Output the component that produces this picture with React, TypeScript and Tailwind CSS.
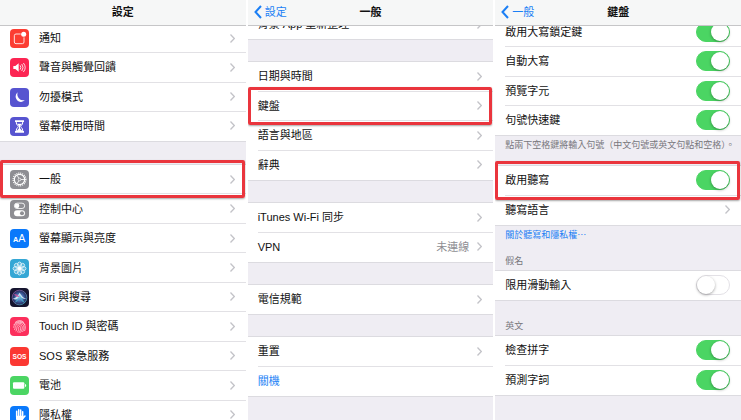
import { useState, type ReactNode } from 'react';
import clsx from 'clsx';

function IconTile({ className, children }: { className: string; children: ReactNode }) {
    return (
        <svg className={clsx('size-[19px] shrink-0 rounded-[4px]', className)} viewBox="0 0 57 57" fill="none" aria-hidden="true">
            {children}
        </svg>
    );
}

const NotificationIcon = () => (
    <IconTile className="bg-[#fc3d32]">
        <path d="M32 15H18a5 5 0 0 0-5 5v19a5 5 0 0 0 5 5h19a5 5 0 0 0 5-5V25" stroke="#fff" strokeWidth="2.5" />
        <circle cx="41" cy="16" r="7.5" fill="#fff" />
    </IconTile>
);

const SoundIcon = () => (
    <IconTile className="bg-[#fc2553]">
        <path d="M10 24h6l10-8v25l-10-8h-6z" fill="#fff" />
        <path d="M31 23q4 5.500 0 11M36 19q7 9.500 0 19M41 16q10 12.500 0 25" stroke="#fff" strokeWidth="2.500" strokeLinecap="round" />
    </IconTile>
);

const MoonIcon = () => (
    <IconTile className="bg-[#5754d0]">
        <path d="M23 13a16 16 0 1 0 22 23A18 18 0 0 1 23 13z" fill="#fff" />
    </IconTile>
);

const HourglassIcon = () => (
    <IconTile className="bg-[#5754d0]">
        <path d="M15 10h27v5H15zM15 42h27v5H15z" fill="#fff" />
        <path d="M19 14v4c0 5 6 8 6 10.500S19 34 19 39v4M38 14v4c0 5-6 8-6 10.500S38 34 38 39v4" stroke="#fff" strokeWidth="3" />
        <path d="M21 20h15l-6 8v6l7 8H20l7-8v-6z" fill="#fff" />
    </IconTile>
);

const GearIcon = () => (
    <IconTile className="bg-[#8e8e93]">
        <circle cx="28.5" cy="28.5" r="19" stroke="#fff" strokeWidth="4" strokeDasharray="3 2.970" />
        <circle cx="28.5" cy="28.5" r="15.5" stroke="#fff" strokeWidth="3.500" />
        <circle cx="28.5" cy="28.5" r="4" stroke="#fff" strokeWidth="2" />
        <path d="M32.500 28.500H43M26.500 25L21 15.500M26.500 32L21 41.500" stroke="#fff" strokeWidth="2.500" />
    </IconTile>
);

const ControlIcon = () => (
    <IconTile className="bg-[#8e8e93]">
        <rect x="13" y="9.500" width="31" height="16" rx="8" stroke="#fff" strokeWidth="2.500" />
        <circle cx="21" cy="17.500" r="7" fill="#fff" />
        <rect x="12" y="31" width="33" height="18" rx="9" fill="#fff" />
        <circle cx="36" cy="40" r="6" fill="#8e8e93" />
    </IconTile>
);

const DisplayIcon = () => (
    <IconTile className="bg-[#0a79fb]">
        <text x="9" y="39" fill="#fff" fontSize="22" fontWeight="600">A</text>
        <text x="25" y="39" fill="#fff" fontSize="32" fontWeight="500">A</text>
    </IconTile>
);

const WallpaperIcon = () => (
    <IconTile className="bg-[#35a7d5]">
        {[0, 45, 90, 135, 180, 225, 270, 315].map((angle) => (
            <ellipse
                key={angle}
                cx="28.5"
                cy="17"
                rx="6"
                ry="8"
                stroke="#fff"
                strokeWidth="2"
                fill="#fff"
                fillOpacity="0.2"
                transform={`rotate(${angle} 28.5 28.5)`}
            />
        ))}
        <circle cx="28.5" cy="28.5" r="5" fill="#fff" />
    </IconTile>
);

const SiriIcon = () => (
    <IconTile className="bg-[#16152f]">
        <defs>
            <radialGradient id="siri-orb">
                <stop offset="0" stopColor="#8fb7e8" />
                <stop offset="0.6" stopColor="#3b5c9c" />
                <stop offset="1" stopColor="#242450" />
            </radialGradient>
            <linearGradient id="siri-rim" x1="0" y1="0" x2="1" y2="1">
                <stop offset="0" stopColor="#b44fa8" />
                <stop offset="1" stopColor="#35c3d6" />
            </linearGradient>
        </defs>
        <circle cx="28.5" cy="28.5" r="22" fill="url(#siri-orb)" stroke="url(#siri-rim)" strokeWidth="2" />
        <path d="M8 32C18 30 24 22 29 14c5 9 11 16 20 19-8 1-14-2-19-8-5 9-13 12-22 7z" fill="#dff3fa" fillOpacity="0.85" />
        <path d="M29 20L14 44c8-1 13-9 15-16 3 9 8 15 16 17z" fill="#4cc5dc" fillOpacity="0.6" />
        <path d="M12 19q8-3 17 7-10 3-17-7z" fill="#cf4d98" fillOpacity="0.8" />
    </IconTile>
);

const FingerprintIcon = () => (
    <IconTile className="bg-[#fc2f5c]">
        <g stroke="#ffd3dc" strokeWidth="2.300" strokeLinecap="round">
            <path d="M16 16C24 8 35 9 41 16M12 23c6-12 27-14 33 0" />
            <path d="M11 31c1-19 34-21 35-1 0 4-1 8-2 11" />
            <path d="M14 38c2-4 1-6 2-9 3-13 24-13 26 1 0 5-1 9-4 14" />
            <path d="M18 42c3-5 2-8 3-12 2-9 15-9 16 1 0 6-2 11-5 15" />
            <path d="M23 45c4-6 3-10 3-14 1-4 6-3 6 0 0 6-1 11-5 16" />
        </g>
    </IconTile>
);

const SosIcon = () => (
    <IconTile className="bg-[#fb3832]">
        <text x="28.5" y="36" fill="#fff" fontSize="20" fontWeight="700" textAnchor="middle">SOS</text>
    </IconTile>
);

const BatteryIcon = () => (
    <IconTile className="bg-[#4bd563]">
        <rect x="9" y="19" width="34" height="19" rx="3" fill="#fff" />
        <path d="M45 24c5 1 5 8 0 9z" fill="#fff" />
    </IconTile>
);

const PrivacyIcon = () => (
    <IconTile className="bg-[#0a79fb]">
        <g stroke="#fff" strokeWidth="4.500" strokeLinecap="round">
            <path d="M20 32V16M26 30V11M32 30V12M38 32V17M39 37l6-7" />
        </g>
        <path d="M18 29h22v7c0 8-4 13-11 13s-11-5-11-12z" fill="#fff" />
    </IconTile>
);

function Chevron() {
    return (
        <svg className="h-[9px] w-[5px] shrink-0" viewBox="0 0 5 9" fill="none" stroke="#c3c3c8" strokeWidth="1.3" aria-hidden="true">
            <path d="M0.500 0.500L4.300 4.500L0.500 8.500" />
        </svg>
    );
}

// Red frame drawn over the row the reader has to tap
function Highlight() {
    return (
        <span className="pointer-events-none absolute right-px left-0 -top-[5px] -bottom-1 z-10 rounded-[2px] border-3 border-[#ea353d] shadow-[0_1px_2px_rgba(0,0,0,0.35)]" />
    );
}

function Panel({ title, back, offset, children }: { title: string; back?: string; offset: string; children: ReactNode }) {
    return (
        <section className="min-w-0 overflow-hidden bg-[#efedf3]">
            <header className="relative z-20 grid h-[26px] grid-cols-[1fr_auto_1fr] items-center border-b border-[#c6c6c8] bg-[#f6f7f7] px-1.5 pb-[2px]">
                <div>
                    {back && (
                        <a href="#" className="flex items-center gap-[3px] text-[#1b7ff5]">
                            <svg className="h-[14px] w-2" viewBox="0 0 8 14" fill="none" stroke="currentColor" strokeWidth="2" aria-hidden="true">
                                <path d="M7 1L1.500 7L7 13" />
                            </svg>
                            {back}
                        </a>
                    )}
                </div>
                <h1 className="font-bold">{title}</h1>
            </header>
            <div className={clsx('flex flex-col', offset)}>{children}</div>
        </section>
    );
}

function Group({ className, children }: { className: string; children: ReactNode }) {
    return (
        <ul className={clsx('grid auto-rows-fr bg-white shadow-[0_0_0_1px_#dcdbe0]', className)}>{children}</ul>
    );
}

interface RowProps {
    label: string;
    icon?: ReactNode;
    value?: string;
    marked?: boolean;
}

function LinkRow({ label, icon, value, marked }: RowProps) {
    return (
        <li className="group relative flex">
            <a href="#" className="flex min-w-0 flex-1 items-center gap-2.5 pl-2.5">
                {icon}
                <span className="flex flex-1 items-center gap-2 self-stretch border-b border-[#e2e1e5] pr-[11px] group-last:border-transparent">
                    <span className="flex-1 whitespace-nowrap">{label}</span>
                    {value && <span className="text-[#8e8e93]">{value}</span>}
                    <Chevron />
                </span>
            </a>
            {marked && <Highlight />}
        </li>
    );
}

function SwitchRow({ label, on = false, marked }: { label: string; on?: boolean; marked?: boolean }) {
    const [checked, setChecked] = useState(on);

    return (
        <li className="group relative flex pl-2.5">
            <label className="flex flex-1 items-center justify-between border-b border-[#e2e1e5] pr-[11px] group-last:border-transparent">
                {label}
                <input
                    type="checkbox"
                    role="switch"
                    checked={checked}
                    onChange={(e) => setChecked(e.target.checked)}
                    className="flex h-5 w-[34px] appearance-none items-center rounded-full border border-[#e3e1e6] bg-white before:size-[18px] before:rounded-full before:bg-white before:shadow-[0_1px_3px_rgba(0,0,0,0.35)] checked:justify-end checked:border-[#4bd563] checked:bg-[#4bd563]"
                />
            </label>
            {marked && <Highlight />}
        </li>
    );
}

export default function App() {
    return (
        <main
            lang="zh-Hant"
            className="grid h-screen grid-cols-3 gap-[2px] overflow-hidden bg-white font-['Liberation_Sans','Noto_Sans_CJK_TC',sans-serif] text-[11px] leading-4 text-[#111]"
        >
            <Panel title="設定" offset="-mt-[2px] gap-6">
                <Group className="min-h-[117px]">
                    <LinkRow icon={<NotificationIcon />} label="通知" />
                    <LinkRow icon={<SoundIcon />} label="聲音與觸覺回饋" />
                    <LinkRow icon={<MoonIcon />} label="勿擾模式" />
                    <LinkRow icon={<HourglassIcon />} label="螢幕使用時間" />
                </Group>
                <Group className="min-h-[265px]">
                    <LinkRow icon={<GearIcon />} label="一般" marked />
                    <LinkRow icon={<ControlIcon />} label="控制中心" />
                    <LinkRow icon={<DisplayIcon />} label="螢幕顯示與亮度" />
                    <LinkRow icon={<WallpaperIcon />} label="背景圖片" />
                    <LinkRow icon={<SiriIcon />} label="Siri 與搜尋" />
                    <LinkRow icon={<FingerprintIcon />} label="Touch ID 與密碼" />
                    <LinkRow icon={<SosIcon />} label="SOS 緊急服務" />
                    <LinkRow icon={<BatteryIcon />} label="電池" />
                    <LinkRow icon={<PrivacyIcon />} label="隱私權" />
                </Group>
            </Panel>

            <Panel title="一般" back="設定" offset="-mt-4 gap-[23px]">
                <Group className="min-h-[29px]">
                    <LinkRow label="背景 App 重新整理" />
                </Group>
                <Group className="min-h-[118px]">
                    <LinkRow label="日期與時間" />
                    <LinkRow label="鍵盤" marked />
                    <LinkRow label="語言與地區" />
                    <LinkRow label="辭典" />
                </Group>
                <Group className="min-h-[59px]">
                    <LinkRow label="iTunes Wi-Fi 同步" />
                    <LinkRow label="VPN" value="未連線" />
                </Group>
                <Group className="min-h-[29px]">
                    <LinkRow label="電信規範" />
                </Group>
                <Group className="min-h-[59px]">
                    <LinkRow label="重置" />
                    <li className="flex items-center pl-2.5">
                        <button type="button" className="text-[#1b7ff5]">關機</button>
                    </li>
                </Group>
            </Panel>

            <Panel title="鍵盤" back="一般" offset="-mt-2">
                <Group className="min-h-[117px]">
                    <SwitchRow label="啟用大寫鎖定鍵" on />
                    <SwitchRow label="自動大寫" on />
                    <SwitchRow label="預覽字元" on />
                    <SwitchRow label="句號快速鍵" on />
                </Group>
                <p className="px-2.5 pt-[2px] pb-[13px] text-[9px] whitespace-nowrap text-[#77777c]">
                    點兩下空格鍵將輸入句號（中文句號或英文句點和空格）。
                </p>
                <Group className="min-h-[59px]">
                    <SwitchRow label="啟用聽寫" on marked />
                    <LinkRow label="聽寫語言" />
                </Group>
                <p className="px-2.5 pt-[2px] text-[9px]">
                    <a href="#" className="text-[#1b7ff5]">關於聽寫和隱私權⋯</a>
                </p>
                <h2 className="px-2.5 pt-2.5 pb-[2px] text-[9px] text-[#77777c]">假名</h2>
                <Group className="min-h-[29px]">
                    <SwitchRow label="限用滑動輸入" />
                </Group>
                <h2 className="px-2.5 pt-[18px] pb-[2px] text-[9px] text-[#77777c]">英文</h2>
                <Group className="min-h-[59px]">
                    <SwitchRow label="檢查拼字" on />
                    <SwitchRow label="預測字詞" on />
                </Group>
            </Panel>
        </main>
    );
}
